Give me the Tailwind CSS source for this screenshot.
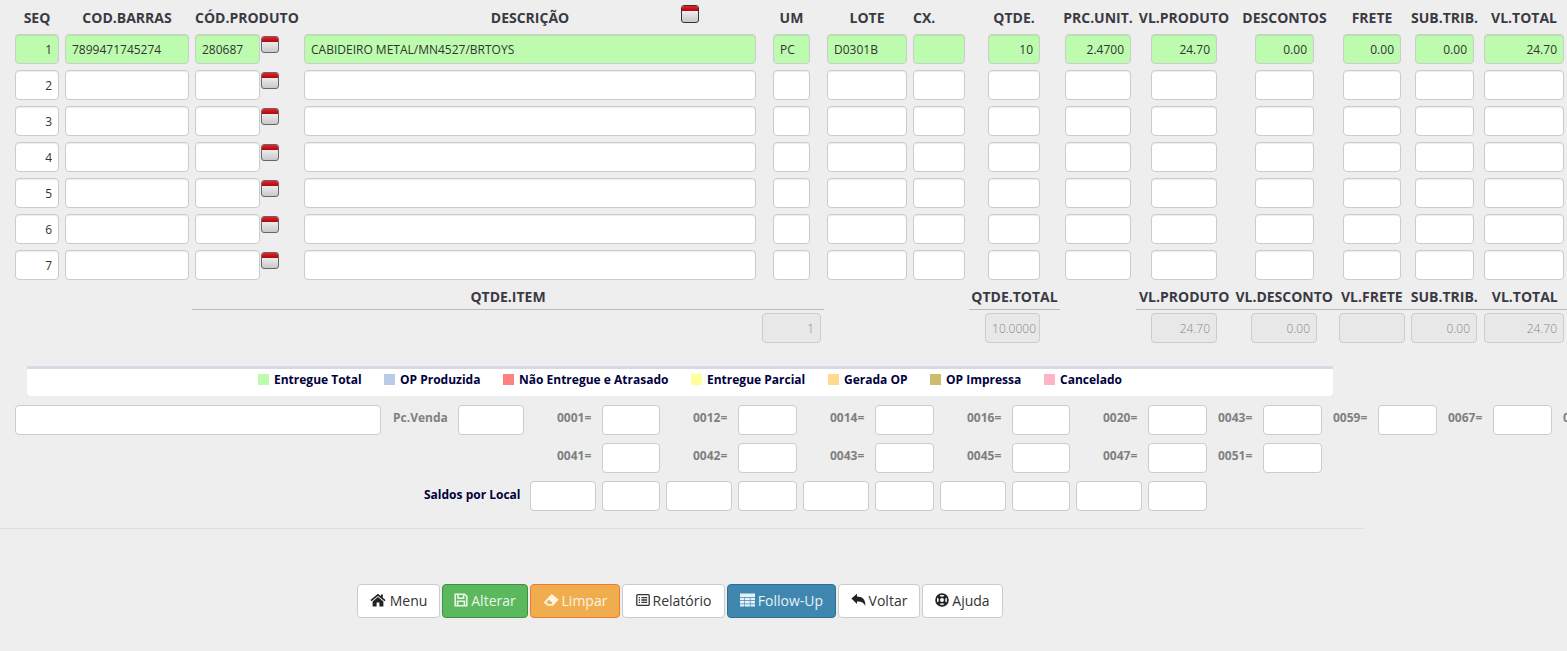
<!DOCTYPE html>
<html lang="en">
<head>
    <meta charset="UTF-8">
    <title>Follow-Up</title>
    <script src="https://cdn.jsdelivr.net/npm/@tailwindcss/browser@4"></script>
</head>
<body class="w-[1567px] h-[651px] overflow-hidden bg-[#eeeeee] font-['Open_Sans',sans-serif] text-[#333]">

    <!-- Column headers -->
    <div id="header" class="flex h-[34px] items-center whitespace-nowrap text-[14px] font-bold text-[#3a3a44]"></div>

    <!-- Item rows, filled in by the script at the bottom -->
    <div id="rows"></div>

    <!-- Totals labels -->
    <div class="flex h-[24px] text-[14px] font-bold text-[#3a3a44] whitespace-nowrap">
        <div class="ml-[192px] w-[632px] border-b border-[#bbb] text-center">QTDE.ITEM</div>
        <div class="ml-[145px] w-[91px] border-b border-[#bbb] text-center">QTDE.TOTAL</div>
        <div class="ml-[76px] w-[431px] border-b border-[#bbb] flex">
            <span class="ml-[3px]">VL.PRODUTO</span>
            <span class="ml-[6px]">VL.DESCONTO</span>
            <span class="ml-[8px]">VL.FRETE</span>
            <span class="ml-[8px]">SUB.TRIB.</span>
            <span class="ml-[14px]">VL.TOTAL</span>
        </div>
    </div>

    <!-- Totals values -->
    <div class="flex mt-[3px] text-[12px] font-light">
        <input disabled value="1" class="ml-[762px] w-[59px] h-[30px] rounded-[4px] border border-[#ccc] bg-[#e8e8e8] px-[6px] text-right text-[#888]">
        <input disabled value="10.0000" class="ml-[164px] w-[55px] h-[30px] rounded-[4px] border border-[#ccc] bg-[#e8e8e8] px-[3px] text-right text-[#888]">
        <input disabled value="24.70" class="ml-[111px] w-[66px] h-[30px] rounded-[4px] border border-[#ccc] bg-[#e8e8e8] px-[6px] text-right text-[#888]">
        <input disabled value="0.00" class="ml-[34px] w-[66px] h-[30px] rounded-[4px] border border-[#ccc] bg-[#e8e8e8] px-[6px] text-right text-[#888]">
        <input disabled value="" class="ml-[22px] w-[66px] h-[30px] rounded-[4px] border border-[#ccc] bg-[#e8e8e8] px-[6px] text-right text-[#888]">
        <input disabled value="0.00" class="ml-[6px] w-[66px] h-[30px] rounded-[4px] border border-[#ccc] bg-[#e8e8e8] px-[6px] text-right text-[#888]">
        <input disabled value="24.70" class="ml-[7px] w-[80px] h-[30px] rounded-[4px] border border-[#ccc] bg-[#e8e8e8] px-[6px] text-right text-[#888]">
    </div>

    <!-- Legend -->
    <div class="ml-[27px] mt-[23px] w-[1306px] h-[30px] pb-[6px] bg-white border-t-[3px] border-[#d9d9e6] rounded-b-[4px] flex items-center text-[12px] font-bold text-[#00003c] whitespace-nowrap">
        <span class="ml-[231px] w-[11px] h-[11px] bg-[#bdfcae]"></span><span class="ml-[5px] w-[104px]">Entregue Total</span>
        <span class="ml-[6px] w-[11px] h-[11px] bg-[#b8cce8]"></span><span class="ml-[5px] w-[103px]">OP Produzida</span>
        <span class="w-[11px] h-[11px] bg-[#ff8080]"></span><span class="ml-[5px] w-[172px]">Não Entregue e Atrasado</span>
        <span class="w-[11px] h-[11px] bg-[#ffff99]"></span><span class="ml-[5px] w-[121px]">Entregue Parcial</span>
        <span class="w-[11px] h-[11px] bg-[#ffd98c]"></span><span class="ml-[5px] w-[86px]">Gerada OP</span>
        <span class="w-[11px] h-[11px] bg-[#cdbd6e]"></span><span class="ml-[5px] w-[98px]">OP Impressa</span>
        <span class="w-[11px] h-[11px] bg-[#ffb3c6]"></span><span class="ml-[5px]">Cancelado</span>
    </div>

    <!-- Balances -->
    <div class="flex items-center mt-[9px] h-[30px] text-[12px] font-bold text-[#808080] whitespace-nowrap [&>*]:shrink-0 [&>span]:pb-[4px]">
        <input class="ml-[15px] w-[366px] h-[30px] rounded-[4px] border border-[#ccc] bg-white">
        <span class="ml-[12px] w-[54px]">Pc.Venda</span>
        <input class="ml-[11px] w-[66px] h-[30px] rounded-[4px] border border-[#ccc] bg-white">
        <span class="ml-[33px] w-[34px]">0001=</span>
        <input class="ml-[11px] w-[58px] h-[30px] rounded-[4px] border border-[#ccc] bg-white">
        <span class="ml-[33px] w-[34px]">0012=</span>
        <input class="ml-[11px] w-[59px] h-[30px] rounded-[4px] border border-[#ccc] bg-white">
        <span class="ml-[33px] w-[34px]">0014=</span>
        <input class="ml-[11px] w-[59px] h-[30px] rounded-[4px] border border-[#ccc] bg-white">
        <span class="ml-[33px] w-[34px]">0016=</span>
        <input class="ml-[11px] w-[58px] h-[30px] rounded-[4px] border border-[#ccc] bg-white">
        <span class="ml-[33px] w-[34px]">0020=</span>
        <input class="ml-[11px] w-[59px] h-[30px] rounded-[4px] border border-[#ccc] bg-white">
        <span class="ml-[11px] w-[34px]">0043=</span>
        <input class="ml-[11px] w-[59px] h-[30px] rounded-[4px] border border-[#ccc] bg-white">
        <span class="ml-[11px] w-[34px]">0059=</span>
        <input class="ml-[11px] w-[59px] h-[30px] rounded-[4px] border border-[#ccc] bg-white">
        <span class="ml-[11px] w-[34px]">0067=</span>
        <input class="ml-[11px] w-[59px] h-[30px] rounded-[4px] border border-[#ccc] bg-white">
        <span class="ml-[11px]">0</span>
    </div>
    <div class="flex items-center mt-[8px] h-[30px] text-[12px] font-bold text-[#808080] whitespace-nowrap [&>span]:pb-[4px]">
        <span class="ml-[557px] w-[34px]">0041=</span>
        <input class="ml-[11px] w-[58px] h-[30px] rounded-[4px] border border-[#ccc] bg-white">
        <span class="ml-[33px] w-[34px]">0042=</span>
        <input class="ml-[11px] w-[59px] h-[30px] rounded-[4px] border border-[#ccc] bg-white">
        <span class="ml-[33px] w-[34px]">0043=</span>
        <input class="ml-[11px] w-[59px] h-[30px] rounded-[4px] border border-[#ccc] bg-white">
        <span class="ml-[33px] w-[34px]">0045=</span>
        <input class="ml-[11px] w-[58px] h-[30px] rounded-[4px] border border-[#ccc] bg-white">
        <span class="ml-[33px] w-[34px]">0047=</span>
        <input class="ml-[11px] w-[59px] h-[30px] rounded-[4px] border border-[#ccc] bg-white">
        <span class="ml-[11px] w-[34px]">0051=</span>
        <input class="ml-[11px] w-[59px] h-[30px] rounded-[4px] border border-[#ccc] bg-white">
    </div>
    <div class="flex items-center mt-[8px] h-[30px] text-[12px] font-bold text-[#00003c] whitespace-nowrap">
        <span class="ml-[424px] w-[106px] pb-[2px]">Saldos por Local</span>
        <input class="w-[66px] h-[30px] rounded-[4px] border border-[#ccc] bg-white">
        <input class="ml-[6px] w-[58px] h-[30px] rounded-[4px] border border-[#ccc] bg-white">
        <input class="ml-[6px] w-[66px] h-[30px] rounded-[4px] border border-[#ccc] bg-white">
        <input class="ml-[6px] w-[59px] h-[30px] rounded-[4px] border border-[#ccc] bg-white">
        <input class="ml-[6px] w-[66px] h-[30px] rounded-[4px] border border-[#ccc] bg-white">
        <input class="ml-[6px] w-[59px] h-[30px] rounded-[4px] border border-[#ccc] bg-white">
        <input class="ml-[6px] w-[66px] h-[30px] rounded-[4px] border border-[#ccc] bg-white">
        <input class="ml-[6px] w-[58px] h-[30px] rounded-[4px] border border-[#ccc] bg-white">
        <input class="ml-[6px] w-[66px] h-[30px] rounded-[4px] border border-[#ccc] bg-white">
        <input class="ml-[6px] w-[59px] h-[30px] rounded-[4px] border border-[#ccc] bg-white">
    </div>

    <hr class="mt-[17px] w-[1363px] border-[#dddddd]">

    <!-- Buttons -->
    <div class="flex gap-[2px] ml-[357px] mt-[55px] h-[34px] text-[14px] text-[#333]">
        <button class="w-[83px] pb-[2px] flex items-center justify-center gap-[4px] rounded-[4px] border border-[#ccc] bg-white">
            <svg class="w-[16px] h-[16px]" viewBox="0 0 16 16" fill="#222"><path d="M8 1.8 L.4 8 L1.4 9.3 L8 3.9 L14.6 9.3 L15.6 8 L12.8 5.7 V2.5 H10.9 V4.2 Z"/><path d="M8 5 L2.6 9.4 V14.4 H6.6 V10.6 H9.4 V14.4 H13.4 V9.4 Z"/></svg>
            Menu
        </button>
        <button class="w-[86px] pb-[2px] flex items-center justify-center gap-[3px] rounded-[4px] border border-[#3d9140] bg-[#5cb85c] text-[#eaf6ea]">
            <svg class="w-[14px] h-[14px]" viewBox="0 0 14 14" fill="none" stroke="#eaf6ea" stroke-width="1.6"><path d="M1.2 1.2 H10.6 L12.8 3.4 V12.8 H1.2 Z"/><path d="M4 1.4 V5.2 H9.6 V1.4"/><path d="M3.6 12.6 V8.2 H10.4 V12.6"/></svg>
            Alterar
        </button>
        <button class="w-[90px] pb-[2px] flex items-center justify-center gap-[3px] rounded-[4px] border border-[#ee7a30] bg-[#f0ad4e] text-[#fdf3e3]">
            <svg class="w-[16px] h-[14px]" viewBox="0 0 16 14" fill="#fdf3e3"><path fill-rule="evenodd" d="M8.6 1 L15.6 6.4 L10 12.8 H4.6 L.6 9.4 Z M3.4 9.2 L5.8 6.8 L9.4 9.8 L8.6 11 H5.2 Z"/></svg>
            Limpar
        </button>
        <button class="w-[103px] pb-[2px] flex items-center justify-center gap-[3px] rounded-[4px] border border-[#ccc] bg-white">
            <svg class="w-[14px] h-[14px]" viewBox="0 0 14 14" fill="none" stroke="#333" stroke-width="1.3"><rect x=".8" y="1.6" width="12.4" height="10.8" rx="1"/><path d="M2.8 4.6 H4 M5.4 4.6 H11.2 M2.8 7 H4 M5.4 7 H11.2 M2.8 9.4 H4 M5.4 9.4 H11.2"/></svg>
            Relatório
        </button>
        <button class="w-[109px] pb-[2px] flex items-center justify-center gap-[3px] rounded-[4px] border border-[#2f6f94] bg-[#3f87ae] text-[#e6f1f7]">
            <svg class="w-[15px] h-[14px]" viewBox="0 0 15 14" fill="#e6f1f7"><path d="M0 .5 H15 V4 H0 Z M0 4.8 H4.4 V7.2 H0 Z M5 4.8 H9.9 V7.2 H5 Z M10.5 4.8 H15 V7.2 H10.5 Z M0 8 H4.4 V10.4 H0 Z M5 8 H9.9 V10.4 H5 Z M10.5 8 H15 V10.4 H10.5 Z M0 11.2 H4.4 V13.5 H0 Z M5 11.2 H9.9 V13.5 H5 Z M10.5 11.2 H15 V13.5 H10.5 Z"/></svg>
            Follow-Up
        </button>
        <button class="w-[82px] pb-[2px] flex items-center justify-center gap-[3px] rounded-[4px] border border-[#ccc] bg-white">
            <svg class="w-[15px] h-[14px]" viewBox="0 0 15 14" fill="#222"><path d="M.4 5.6 L6 .8 V3.6 C11.4 3.6 14.6 6.6 14.4 13 C13 9.8 10.6 8.4 6 8.4 V11 Z"/></svg>
            Voltar
        </button>
        <button class="w-[81px] pb-[2px] flex items-center justify-center gap-[3px] rounded-[4px] border border-[#ccc] bg-white">
            <svg class="w-[14px] h-[14px]" viewBox="0 0 14 14" fill="none" stroke="#222"><circle cx="7" cy="7" r="5.9" stroke-width="1.8"/><circle cx="7" cy="7" r="2.7" stroke-width="1.5"/><path d="M2.8 2.8 L5 5 M11.2 2.8 L9 5 M2.8 11.2 L5 9 M11.2 11.2 L9 9" stroke-width="2.8"/></svg>
            Ajuda
        </button>
    </div>

    <!-- Calendar icon, placed absolutely above the header row -->
    <div class="absolute left-[681px] top-[5px] w-[18px] h-[18px] rounded-[3px] border border-[#333] overflow-hidden bg-linear-to-b from-white to-[#c8c8c8]">
        <div class="h-[5px] bg-linear-to-b from-[#e8202a] to-[#a80a10]"></div>
    </div>

    <script>
        const cols = [
            { title: 'SEQ', box: 'ml-[15px] w-[44px]', right: true },
            { title: 'COD.BARRAS', box: 'ml-[6px] w-[124px]' },
            { title: 'CÓD.PRODUTO', box: 'ml-[6px] w-[65px]', cal: true },
            { title: 'DESCRIÇÃO', box: 'ml-[25px] w-[452px]' },
            { title: 'UM', box: 'ml-[17px] w-[37px]' },
            { title: 'LOTE', box: 'ml-[17px] w-[80px]' },
            { title: 'CX.', box: 'ml-[6px] w-[52px]', left: true },
            { title: 'QTDE.', box: 'ml-[23px] w-[52px]', right: true },
            { title: 'PRC.UNIT.', box: 'ml-[25px] w-[66px]', right: true },
            { title: 'VL.PRODUTO', box: 'ml-[20px] w-[66px]', right: true },
            { title: 'DESCONTOS', box: 'ml-[38px] w-[59px]', right: true },
            { title: 'FRETE', box: 'ml-[29px] w-[58px]', right: true },
            { title: 'SUB.TRIB.', box: 'ml-[14px] w-[59px]', right: true },
            { title: 'VL.TOTAL', box: 'ml-[10px] w-[80px]', right: true }
        ];
        const firstRow = ['1', '7899471745274', '280687', 'CABIDEIRO METAL/MN4527/BRTOYS', 'PC', 'D0301B', '', '10', '2.4700', '24.70', '0.00', '0.00', '0.00', '24.70'];
        const calendar = '<div class="ml-[1px] mt-[2px] w-[18px] h-[17px] shrink-0 rounded-[3px] border border-[#666] overflow-hidden bg-linear-to-b from-white to-[#c8c8c8]"><div class="h-[5px] bg-linear-to-b from-[#e8202a] to-[#a80a10]"></div></div>';

        let head = '';
        cols.forEach(c => {
            const align = c.cal || c.left ? 'justify-start' : 'justify-center';
            // the product column also covers the calendar icon
            const extra = c.cal ? '<div class="w-[19px] shrink-0"></div>' : '';
            head += `<div class="${c.box} shrink-0 flex ${align}">${c.title}</div>${extra}`;
        });
        document.getElementById('header').innerHTML = head;

        let rows = '';
        for (let i = 0; i < 7; i++) {
            let cells = '';
            cols.forEach((c, n) => {
                const value = i === 0 ? firstRow[n] : (n === 0 ? String(i + 1) : '');
                const bg = i === 0 ? 'bg-[#bdfcae]' : 'bg-white';
                const align = c.right ? 'text-right' : 'text-left';
                cells += `<input value="${value}" class="${c.box} ${bg} ${align} shrink-0 h-[30px] rounded-[4px] border border-[#ccc] px-[6px] text-[12px] text-[#333] shadow-[inset_0_1px_1px_rgba(0,0,0,0.075)]">`;
                if (c.cal) cells += calendar;
            });
            rows += `<div class="flex h-[30px] mb-[6px]">${cells}</div>`;
        }
        document.getElementById('rows').innerHTML = rows;
    </script>
</body>
</html>
